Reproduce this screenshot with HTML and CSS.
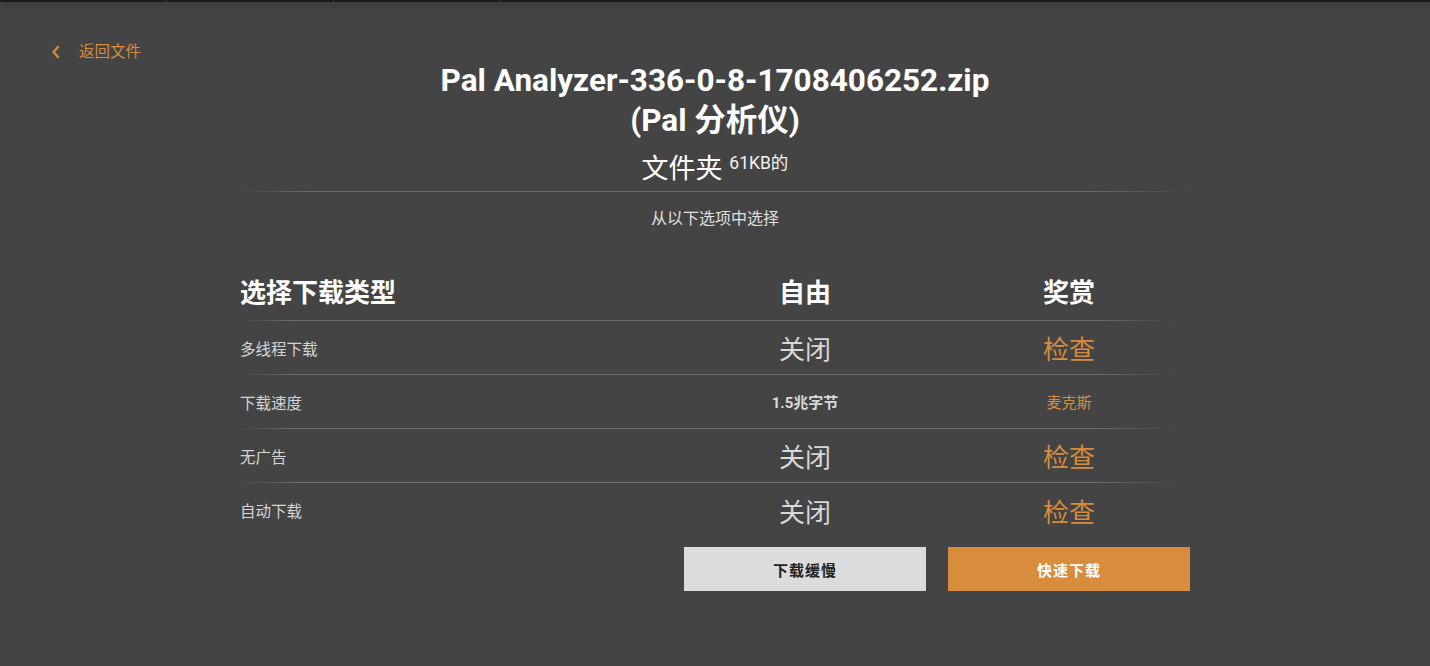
FILE: index.html
```html
<!DOCTYPE html>
<html lang="zh-CN">
<head>
<meta charset="utf-8">
<title>Pal Analyzer</title>
<link rel="stylesheet" href="styles.css">
</head>
<body>
<div class="topbar">
  <div class="tab"></div>
  <div class="tab"></div>
  <div class="tab tab-last"></div>
</div>
<a class="back" href="#">
  <svg class="chev" width="10" height="14" viewBox="0 0 10 14"><path d="M7 2 L2.5 7 L7 12" fill="none" stroke="#d68b3d" stroke-width="2.4" stroke-linecap="round" stroke-linejoin="round"/></svg>
  <span>返回文件</span>
</a>
<main class="wrap">
  <h1 class="title">Pal Analyzer-336-0-8-1708406252.zip<br>(Pal 分析仪)</h1>
  <h2 class="meta">文件夹 <span class="size">61KB的</span></h2>
  <div class="line"></div>
  <p class="choose">从以下选项中选择</p>

  <div class="table">
    <div class="row head">
      <div class="c1">选择下载类型</div>
      <div class="c2">自由</div>
      <div class="c3">奖赏</div>
    </div>
    <div class="row">
      <div class="c1 label">多线程下载</div>
      <div class="c2 big">关闭</div>
      <div class="c3 big orange">检查</div>
    </div>
    <div class="row">
      <div class="c1 label">下载速度</div>
      <div class="c2 small bold">1.5兆字节</div>
      <div class="c3 small orange">麦克斯</div>
    </div>
    <div class="row">
      <div class="c1 label">无广告</div>
      <div class="c2 big">关闭</div>
      <div class="c3 big orange">检查</div>
    </div>
    <div class="row last">
      <div class="c1 label">自动下载</div>
      <div class="c2 big">关闭</div>
      <div class="c3 big orange">检查</div>
    </div>
    <div class="btns">
      <div></div>
      <button class="btn btn-slow">下载缓慢</button>
      <button class="btn btn-fast">快速下载</button>
    </div>
  </div>
</main>
</body>
</html>
```
FILE: styles.css
```css
html, body {
  margin: 0;
  padding: 0;
}
body {
  background: #444444;
  font-family: Roboto, "Noto Sans CJK SC", "Noto Sans", sans-serif;
  color: #ffffff;
  height: 666px;
  overflow: hidden;
}
.topbar {
  display: flex;
  height: 2px;
  background: #1b1b1b;
  box-shadow: 0 1px 10px rgba(0, 0, 0, 0.55);
  position: relative;
}
.tab {
  width: 166px;
  border-right: 1px solid #3a3a3a;
}
.back {
  display: flex;
  align-items: center;
  gap: 18px;
  width: max-content;
  margin: 40px 0 0 51px;
  height: 20px;
  color: #d68b3d;
  text-decoration: none;
  font-size: 15.5px;
  line-height: 20px;
}
.chev {
  display: block;
}
.wrap {
  width: 950px;
  margin: 0 auto;
}
.title {
  margin: -1px 0 0;
  font-size: 31.5px;
  line-height: 40px;
  font-weight: 700;
  text-align: center;
  color: #ffffff;
}
.meta {
  margin: 10px 0 0;
  text-align: center;
  font-size: 27px;
  line-height: 36px;
  font-weight: 400;
  color: #ffffff;
}
.size {
  font-size: 17.5px;
  vertical-align: top;
  line-height: 24px;
  color: #f2f2f2;
}
.line {
  height: 1px;
  margin-top: 4px;
  background: linear-gradient(to right, rgba(120,120,120,0) 0%, #6e6e6e 8%, #6e6e6e 88%, rgba(120,120,120,0) 100%);
}
.choose {
  margin: 15px 0 0;
  text-align: center;
  font-size: 16px;
  line-height: 24px;
  color: #e0e0e0;
}
.table {
  margin-top: 36px;
}
.row {
  display: grid;
  grid-template-columns: 1fr 242px 242px;
  column-gap: 22px;
  align-items: center;
  height: 53px;
  border-bottom: 1px solid transparent;
  border-image: linear-gradient(to right, rgba(120,120,120,0) 0%, #6e6e6e 6%, #6e6e6e 90%, rgba(120,120,120,0) 98%) 1;
}
.row.last {
  border-bottom: none;
  border-image: none;
  height: 54px;
}
.head {
  padding-bottom: 6px;
  height: 47px;
}
.head .c1,
.head .c2,
.head .c3 {
  font-size: 26px;
  font-weight: 700;
}
.c2, .c3 {
  text-align: center;
}
.label {
  font-size: 15.5px;
  color: #d4d4d4;
}
.big {
  font-size: 26px;
  color: #d8d8d8;
}
.small {
  font-size: 15px;
  color: #d8d8d8;
}
.bold {
  font-weight: 700;
}
.orange {
  color: #d68b3d;
}
.btns {
  display: grid;
  grid-template-columns: 1fr 242px 242px;
  column-gap: 22px;
  margin-top: 10px;
}
.btn {
  height: 44px;
  border: none;
  font-family: Roboto, "Noto Sans CJK SC", sans-serif;
  font-size: 15px;
  font-weight: 700;
  letter-spacing: 1px;
  cursor: pointer;
}
.btn-slow {
  background: #dcdcdc;
  color: #222222;
}
.btn-fast {
  background: #d78c3e;
  color: #ffffff;
}
```
